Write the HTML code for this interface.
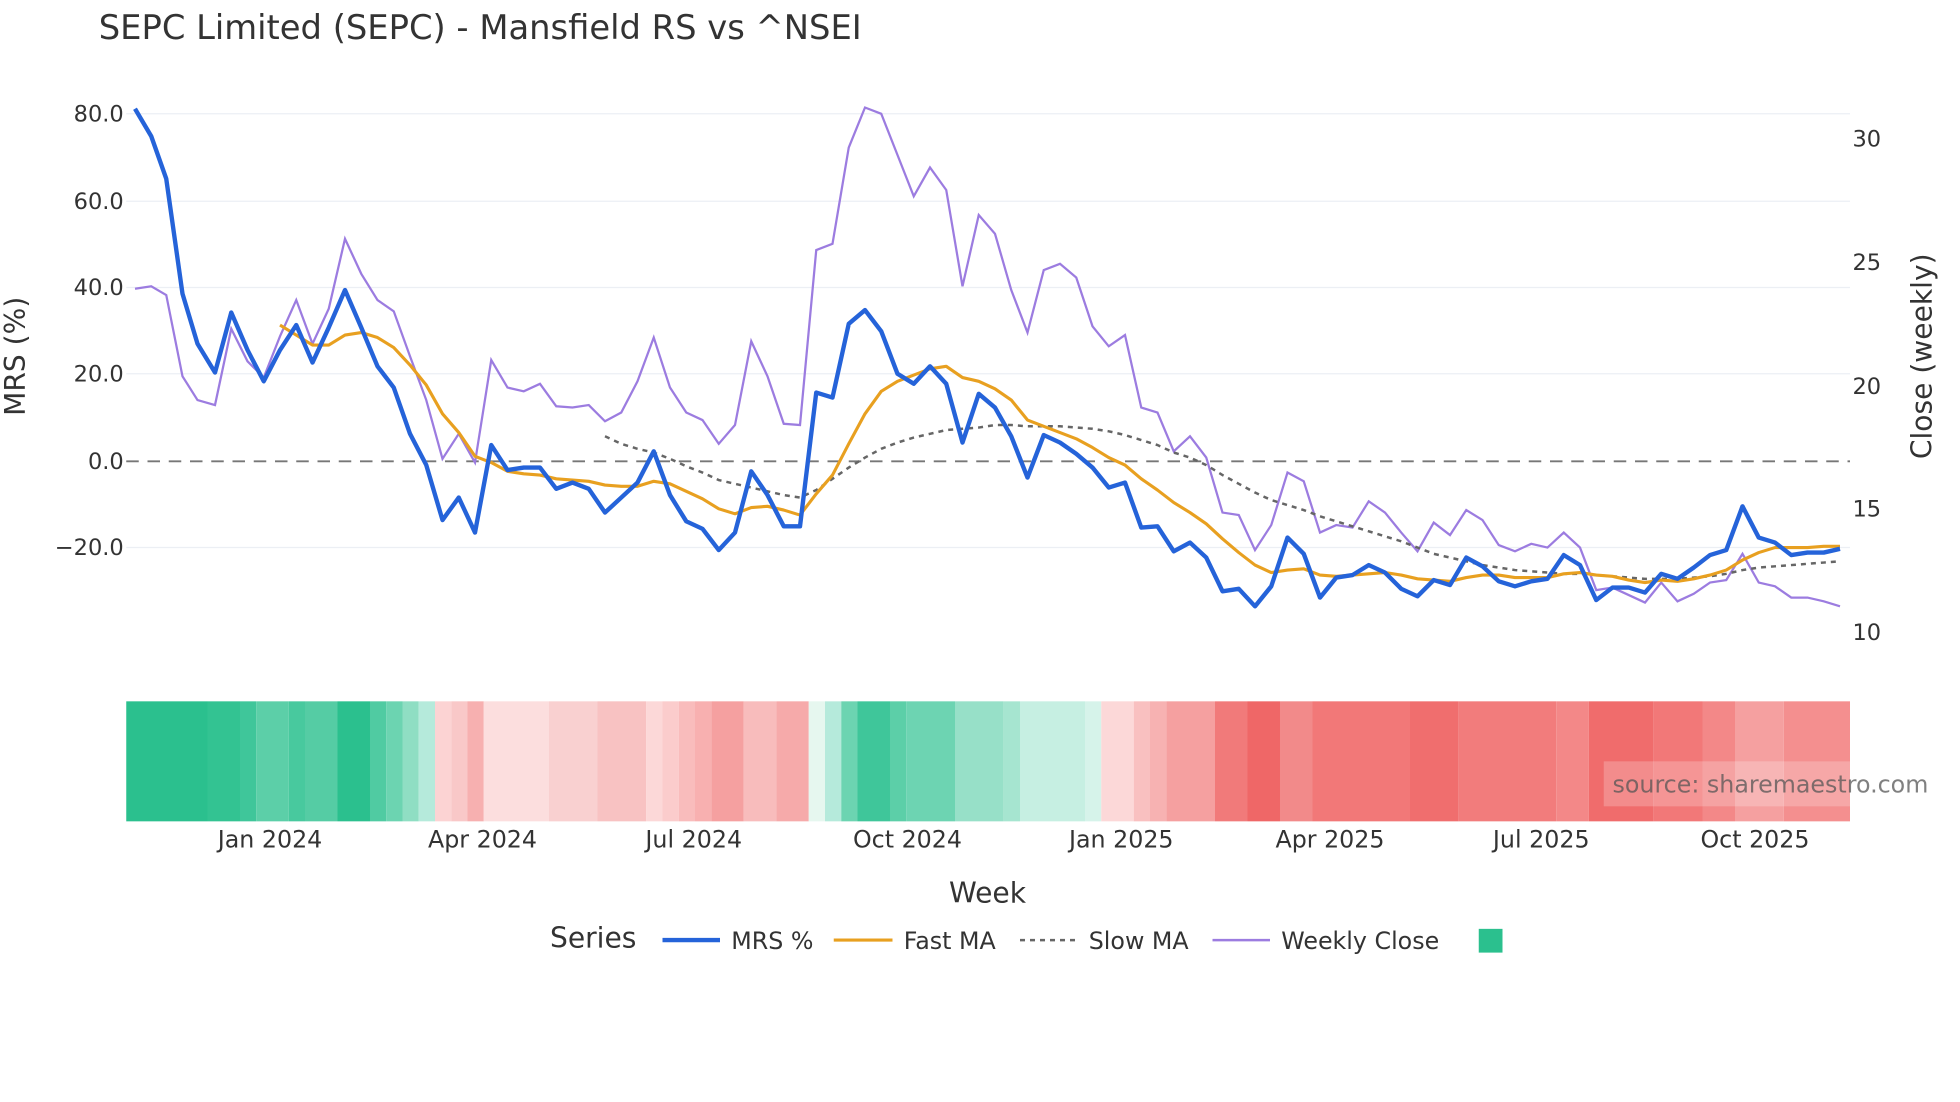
<!DOCTYPE html>
<html><head><meta charset="utf-8"><style>
html,body{margin:0;padding:0;background:#fff;width:1960px;height:1102px;overflow:hidden}
svg{display:block}
text{font-family:"DejaVu Sans","Liberation Sans",sans-serif;fill:#333}
</style></head><body>
<svg width="1960" height="1102" viewBox="0 0 1568 881.5" preserveAspectRatio="none" xmlns="http://www.w3.org/2000/svg">
<rect width="1568" height="882" fill="#fff"/>
<text x="79" y="31" font-size="27">SEPC Limited (SEPC) - Mansfield RS vs ^NSEI</text>
<g stroke="#eceff4" stroke-width="1">
<line x1="101" x2="1480" y1="91" y2="91"/><line x1="101" x2="1480" y1="161" y2="161"/><line x1="101" x2="1480" y1="230" y2="230"/><line x1="101" x2="1480" y1="299" y2="299"/><line x1="101" x2="1480" y1="438" y2="438"/>
</g>
<line x1="101" x2="1480" y1="369" y2="369" stroke="#777" stroke-width="1.5" stroke-dasharray="10,7"/>
<g font-size="18" text-anchor="end">
<text x="99" y="97">80.0</text><text x="99" y="167">60.0</text><text x="99" y="236">40.0</text><text x="99" y="305">20.0</text><text x="99" y="375">0.0</text><text x="99" y="444">−20.0</text>
</g>
<g font-size="18">
<text x="1482" y="117">30</text><text x="1482" y="216">25</text><text x="1482" y="315">20</text><text x="1482" y="413">15</text><text x="1482" y="512">10</text>
</g>
<text transform="translate(20,285) rotate(-90)" text-anchor="middle" font-size="22.5">MRS (%)</text>
<text transform="translate(1545,285) rotate(-90)" text-anchor="middle" font-size="22.5">Close (weekly)</text>
<polyline fill="none" stroke="#9c7ce0" stroke-width="1.8" points="108,231 121,229 133,236 146,301 158,320 172,324 185,263 198,289 211,302 224,269 237,240 250,275 263,247 276,191 289,219 302,240 315,249 328,285 341,320 354,367 367,347 380,370 393,288 406,310 419,313 432,307 445,325 458,326 471,324 484,337 497,330 510,305 523,270 536,310 549,330 562,336 575,355 588,340 601,273 614,301 627,339 640,340 653,200 666,195 679,118 692,86 705,91 718,124 731,157 744,134 757,152 770,229 783,172 796,187 809,232 822,266 835,216 848,211 861,222 874,261 887,277 900,268 913,326 926,330 939,361 952,349 965,366 978,410 991,412 1004,440 1017,420 1030,378 1043,385 1056,426 1069,420 1082,422 1095,401 1108,410 1121,426 1134,441 1147,418 1160,428 1173,408 1186,416 1199,436 1212,441 1225,435 1238,438 1251,426 1264,438 1277,472 1290,470 1303,476 1316,482 1329,466 1342,481 1355,475 1368,466 1381,464 1394,443 1407,466 1420,469 1433,478 1446,478 1459,481 1472,485"/>
<polyline fill="none" stroke="#666" stroke-width="2" stroke-dasharray="4,4" points="484,349 497,355 510,359 523,362 536,367 549,373 562,378 575,384 588,387 601,390 614,393 627,396 640,398 653,392 666,383 679,374 692,366 705,359 718,354 731,350 744,347 757,344 770,343 783,342 796,340 809,340 822,341 835,341 848,341 861,342 874,343 887,345 900,348 913,352 926,356 939,362 952,366 965,372 978,380 991,387 1004,394 1017,400 1030,404 1043,408 1056,413 1069,417 1082,421 1095,425 1108,429 1121,433 1134,438 1147,443 1160,446 1173,449 1186,452 1199,454 1212,456 1225,457 1238,458 1251,459 1264,459 1277,460 1290,461 1303,462 1316,463 1329,463 1342,463 1355,462 1368,461 1381,459 1394,456 1407,454 1420,453 1433,452 1446,451 1459,450 1472,449"/>
<polyline fill="none" stroke="#e8a020" stroke-width="2.5" stroke-linejoin="round" points="224,260 237,268 250,276 263,276 276,268 289,266 302,270 315,278 328,292 341,308 354,331 367,346 380,365 393,370 406,377 419,379 432,380 445,383 458,384 471,385 484,388 497,389 510,389 523,385 536,387 549,393 562,399 575,407 588,411 601,406 614,405 627,408 640,412 653,395 666,380 679,355 692,331 705,313 718,305 731,300 744,295 757,293 770,302 783,305 796,311 809,320 822,336 835,341 848,346 861,351 874,358 887,366 900,372 913,383 926,392 939,402 952,410 965,419 978,431 991,442 1004,452 1017,458 1030,456 1043,455 1056,460 1069,461 1082,460 1095,459 1108,458 1121,460 1134,463 1147,464 1160,465 1173,462 1186,460 1199,460 1212,462 1225,462 1238,462 1251,459 1264,458 1277,460 1290,461 1303,464 1316,466 1329,464 1342,465 1355,463 1368,460 1381,456 1394,448 1407,442 1420,438 1433,438 1446,438 1459,437 1472,437"/>
<polyline fill="none" stroke="#2563d9" stroke-width="3.5" stroke-linejoin="round" points="108,87 121,109 133,143 146,235 158,275 172,298 185,250 198,280 211,305 224,280 237,260 250,290 263,262 276,232 289,262 302,293 315,310 328,347 341,372 354,416 367,398 380,426 393,356 406,376 419,374 432,374 445,391 458,386 471,391 484,410 497,398 510,386 523,361 536,396 549,417 562,423 575,440 588,426 601,377 614,396 627,421 640,421 653,314 666,318 679,259 692,248 705,265 718,299 731,307 744,293 757,307 770,354 783,315 796,326 809,349 822,382 835,348 848,354 861,363 874,374 887,390 900,386 913,422 926,421 939,441 952,434 965,446 978,473 991,471 1004,485 1017,469 1030,430 1043,443 1056,478 1069,462 1082,460 1095,452 1108,458 1121,471 1134,477 1147,464 1160,468 1173,446 1186,453 1199,465 1212,469 1225,465 1238,463 1251,444 1264,452 1277,480 1290,470 1303,470 1316,474 1329,459 1342,463 1355,454 1368,444 1381,440 1394,405 1407,430 1420,434 1433,444 1446,442 1459,442 1472,439"/>
<g>
<rect x="101" y="561" width="65" height="96" fill="#2bc08e"/><rect x="166" y="561" width="26" height="96" fill="#33c392"/><rect x="192" y="561" width="13" height="96" fill="#3fc69a"/><rect x="205" y="561" width="26" height="96" fill="#5ccfa8"/><rect x="231" y="561" width="13" height="96" fill="#48c99e"/><rect x="244" y="561" width="26" height="96" fill="#55cca4"/><rect x="270" y="561" width="26" height="96" fill="#2bc08e"/><rect x="296" y="561" width="13" height="96" fill="#50cba2"/><rect x="309" y="561" width="13" height="96" fill="#6cd4b1"/><rect x="322" y="561" width="13" height="96" fill="#8fdec3"/><rect x="335" y="561" width="13" height="96" fill="#b5eadb"/><rect x="348" y="561" width="13" height="96" fill="#fcd3d3"/><rect x="361" y="561" width="13" height="96" fill="#f9c8c8"/><rect x="374" y="561" width="13" height="96" fill="#f7b0b0"/><rect x="387" y="561" width="52" height="96" fill="#fcdede"/><rect x="439" y="561" width="39" height="96" fill="#f9d0d0"/><rect x="478" y="561" width="39" height="96" fill="#f8c2c2"/><rect x="517" y="561" width="13" height="96" fill="#fcd8d8"/><rect x="530" y="561" width="13" height="96" fill="#fbcccc"/><rect x="543" y="561" width="13" height="96" fill="#f9bcbc"/><rect x="556" y="561" width="13" height="96" fill="#f8b0b0"/><rect x="569" y="561" width="26" height="96" fill="#f5a0a0"/><rect x="595" y="561" width="26" height="96" fill="#f8bcbc"/><rect x="621" y="561" width="26" height="96" fill="#f6aaaa"/><rect x="647" y="561" width="13" height="96" fill="#e6f7ef"/><rect x="660" y="561" width="13" height="96" fill="#b5eadb"/><rect x="673" y="561" width="13" height="96" fill="#6cd4b1"/><rect x="686" y="561" width="26" height="96" fill="#3fc69a"/><rect x="712" y="561" width="13" height="96" fill="#5ccfa8"/><rect x="725" y="561" width="39" height="96" fill="#6dd4b2"/><rect x="764" y="561" width="39" height="96" fill="#97e0c8"/><rect x="803" y="561" width="13" height="96" fill="#a6e5d0"/><rect x="816" y="561" width="52" height="96" fill="#c6efe2"/><rect x="868" y="561" width="13" height="96" fill="#d6f3ea"/><rect x="881" y="561" width="26" height="96" fill="#fcd8d8"/><rect x="907" y="561" width="13" height="96" fill="#f9c0c0"/><rect x="920" y="561" width="13" height="96" fill="#f7b2b2"/><rect x="933" y="561" width="39" height="96" fill="#f5a0a0"/><rect x="972" y="561" width="26" height="96" fill="#f17a7a"/><rect x="998" y="561" width="26" height="96" fill="#ef6767"/><rect x="1024" y="561" width="26" height="96" fill="#f28a8a"/><rect x="1050" y="561" width="78" height="96" fill="#f27878"/><rect x="1128" y="561" width="39" height="96" fill="#f06e6e"/><rect x="1167" y="561" width="78" height="96" fill="#f27c7c"/><rect x="1245" y="561" width="26" height="96" fill="#f38888"/><rect x="1271" y="561" width="52" height="96" fill="#f06c6c"/><rect x="1323" y="561" width="39" height="96" fill="#f27878"/><rect x="1362" y="561" width="26" height="96" fill="#f38888"/><rect x="1388" y="561" width="39" height="96" fill="#f5a0a0"/><rect x="1427" y="561" width="53" height="96" fill="#f48f8f"/>
</g>
<rect x="1283" y="609" width="197" height="36" fill="#fff" fill-opacity="0.22"/>
<text x="1290" y="634" font-size="19" style="fill:#555;fill-opacity:0.75">source: sharemaestro.com</text>
<g font-size="19" text-anchor="middle">
<text x="216" y="678">Jan 2024</text><text x="386" y="678">Apr 2024</text><text x="555" y="678">Jul 2024</text><text x="726" y="678">Oct 2024</text><text x="897" y="678">Jan 2025</text><text x="1064" y="678">Apr 2025</text><text x="1233" y="678">Jul 2025</text><text x="1404" y="678">Oct 2025</text>
</g>
<text x="790" y="722" font-size="22.5" text-anchor="middle">Week</text>
<text x="440" y="758" font-size="22.5">Series</text>
<line x1="530" x2="576" y1="752" y2="752" stroke="#2563d9" stroke-width="3.5"/>
<text x="585" y="759" font-size="19">MRS %</text>
<line x1="667" x2="714" y1="752" y2="752" stroke="#e8a020" stroke-width="2.5"/>
<text x="723" y="759" font-size="19">Fast MA</text>
<line x1="816" x2="860" y1="752" y2="752" stroke="#666" stroke-width="2" stroke-dasharray="4,4"/>
<text x="871" y="759" font-size="19">Slow MA</text>
<line x1="970" x2="1016" y1="752" y2="752" stroke="#9c7ce0" stroke-width="2"/>
<text x="1025" y="759" font-size="19">Weekly Close</text>
<rect x="1183" y="743" width="19" height="19" fill="#2bc08e"/>
</svg>
</body></html>
